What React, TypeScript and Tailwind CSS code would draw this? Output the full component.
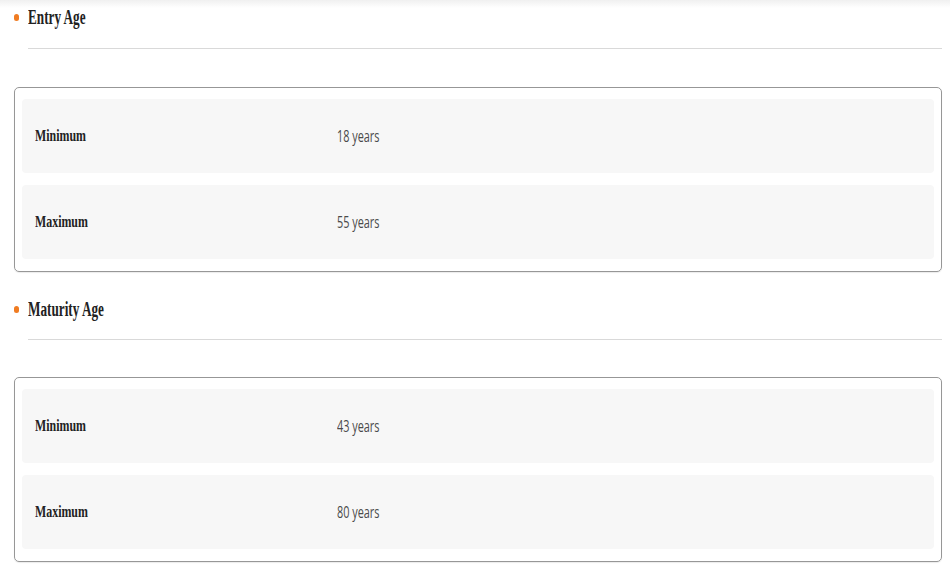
import React from 'react';

const serif = { fontFamily: '"Liberation Serif", "Times New Roman", serif' };
const sans = { fontFamily: '"Open Sans", "Liberation Sans", sans-serif' };

interface AgeRow {
  label: string;
  value: string;
}

const sections: { title: string; rows: AgeRow[] }[] = [
  {
    title: 'Entry Age',
    rows: [
      { label: 'Minimum', value: '18 years' },
      { label: 'Maximum', value: '55 years' },
    ],
  },
  {
    title: 'Maturity Age',
    rows: [
      { label: 'Minimum', value: '43 years' },
      { label: 'Maximum', value: '80 years' },
    ],
  },
];

const Section: React.FC<{ title: string; rows: AgeRow[]; first?: boolean }> = ({ title, rows, first }) => (
  <div className={first ? '' : 'mt-[27px]'}>
    <div className="flex items-center h-5">
      <span className="w-[5px] h-[7px] rounded-full bg-[#f07c22]" />
      <span
        className="ml-[9px] inline-block origin-left scale-x-[0.66] text-[20px] font-bold leading-5 text-[#222] whitespace-nowrap"
        style={serif}
      >
        {title}
      </span>
    </div>
    <div className={`ml-[14px] h-px bg-[#d9d9d9] ${first ? 'mt-[21px]' : 'mt-[20px]'}`} />
    <div
      className={`rounded-[5px] border border-[#979797] px-[7px] pt-[11px] pb-[12px] flex flex-col gap-3 shadow-[0_1px_1px_rgba(0,0,0,0.08)] ${
        first ? 'mt-[38px]' : 'mt-[37px]'
      }`}
    >
      {rows.map(row => (
        <div key={row.label} className="h-[74px] rounded-[4px] bg-[#f7f7f7] pl-[13px] grid grid-cols-[302px_1fr] items-center">
          <span
            className="inline-block origin-left scale-x-[0.7] text-[17px] font-bold text-[#222] whitespace-nowrap"
            style={serif}
          >
            {row.label}
          </span>
          <span
            className="inline-block origin-left scale-x-[0.68] text-[16px] text-[#4a4a4a] whitespace-nowrap"
            style={sans}
          >
            {row.value}
          </span>
        </div>
      ))}
    </div>
  </div>
);

export default function App() {
  return (
    <div className="w-[950px] h-[575px] bg-white overflow-hidden relative">
      <div className="absolute inset-x-0 top-0 h-2 bg-gradient-to-b from-[#f0f0f0] to-white" />
      <div className="relative pl-[14px] pr-[8px] pt-[7px]">
        {sections.map((s, i) => (
          <Section key={s.title} title={s.title} rows={s.rows} first={i === 0} />
        ))}
      </div>
    </div>
  );
}
